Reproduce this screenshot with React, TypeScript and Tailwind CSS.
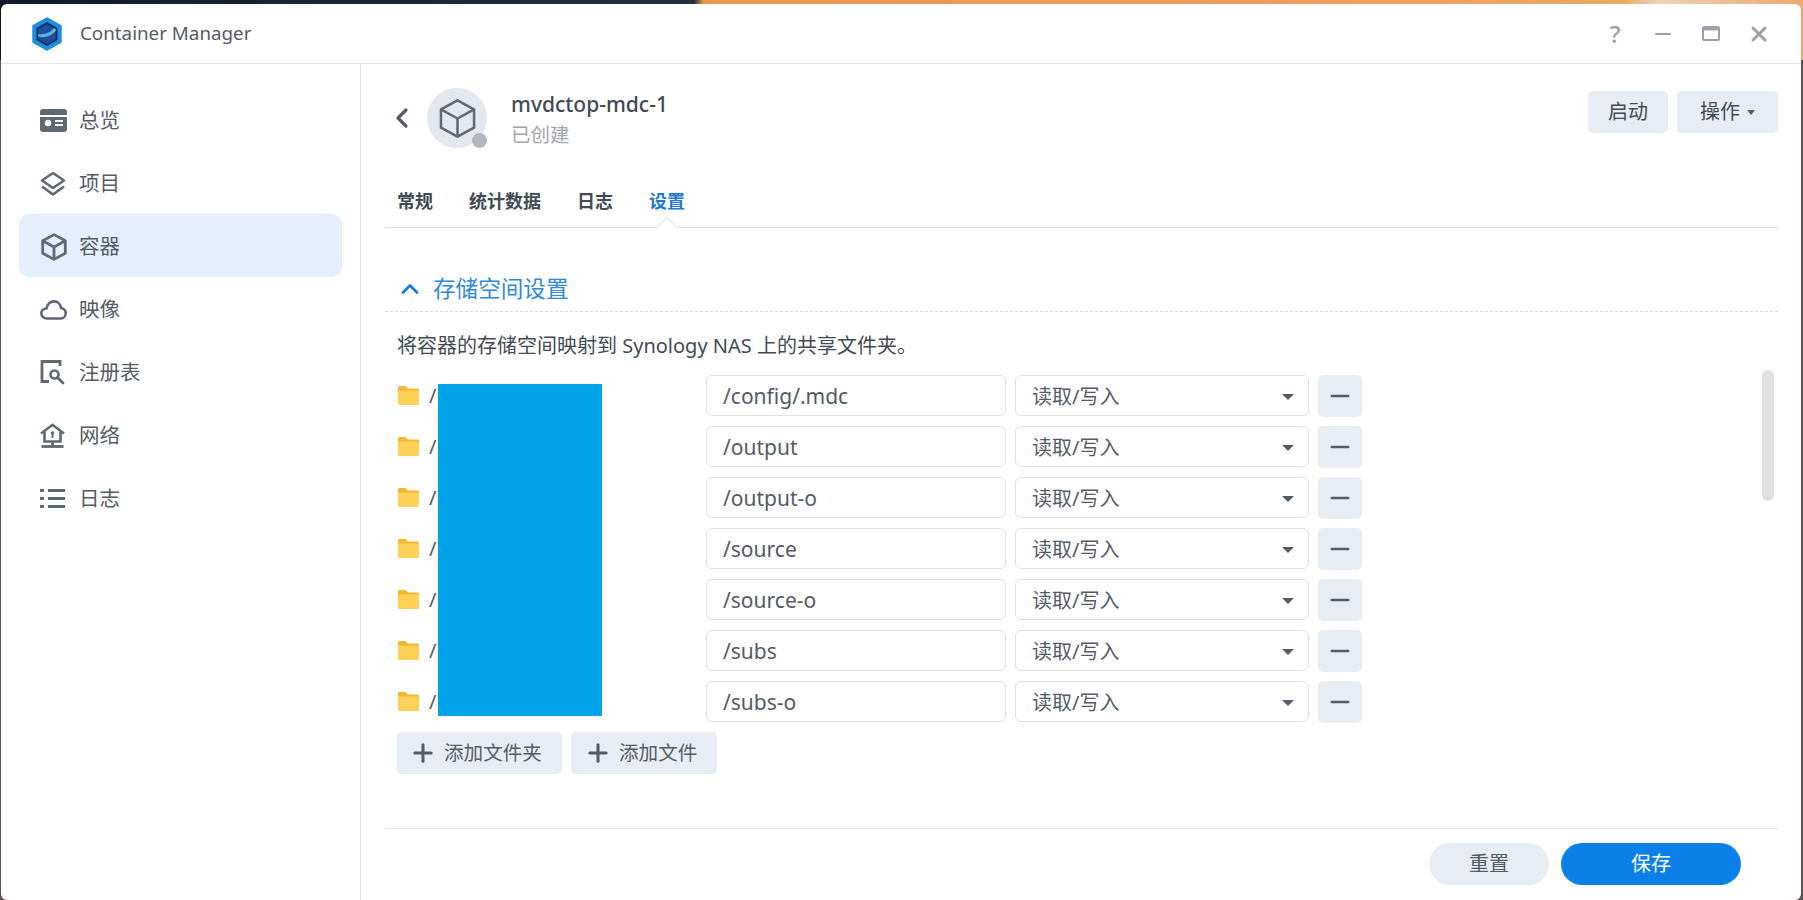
import { ChevronLeft, ChevronUp, Plus, Minus, X } from "lucide-react"

const mountRows = ["/config/.mdc", "/output", "/output-o", "/source", "/source-o", "/subs", "/subs-o"]

const tabs = ["常规", "统计数据", "日志", "设置"]

function Logo() {
  return (
    <svg width="32" height="34" viewBox="0 0 32 34">
      <path d="M16 1.5 L29.5 9.2 V24.8 L16 32.5 L2.5 24.8 V9.2 Z" fill="#1a8fe0" stroke="#1a8fe0" strokeWidth="2.5" strokeLinejoin="round" />
      <path d="M16 5 L26.5 11 V23 L16 29 L5.5 23 V11 Z" fill="#12295a" />
      <path d="M16 7 L24.8 12 V22 L16 27 L7.2 22 V12 Z" fill="#1c4f9f" />
      <path d="M7.2 17 C13 18 20 15.5 23 11 L24.8 12 V13.5 C21 19 13 21.5 7.2 19.5 Z" fill="#58b4d8" />
    </svg>
  )
}

function OverviewIcon() {
  return (
    <svg width="27" height="23" viewBox="0 0 27 23" fill="none">
      <rect width="27" height="23" rx="3" fill="#5f6873" />
      <rect x="0" y="6" width="27" height="2" fill="#fff" />
      <circle cx="8" cy="14" r="3.2" fill="#fff" />
      <rect x="15" y="11" width="8" height="2" fill="#fff" />
      <rect x="15" y="15" width="8" height="2" fill="#fff" />
    </svg>
  )
}

function LayersIcon() {
  return (
    <svg width="26" height="26" viewBox="0 0 26 26" fill="none" stroke="#5f6873" strokeWidth="2.6" strokeLinejoin="round">
      <path d="M13 2 L24 9.5 L13 17 L2 9.5 Z" />
      <path d="M2 15.5 L13 23.5 L24 15.5" />
    </svg>
  )
}

function CubeIcon({ size, stroke, width }: { size: number; stroke: string; width: number }) {
  return (
    <svg width={size} height={size} viewBox="0 0 26 26" fill="none" stroke={stroke} strokeWidth={width} strokeLinejoin="round">
      <path d="M13 1.5 L23.5 7.2 V18.8 L13 24.5 L2.5 18.8 V7.2 Z" />
      <path d="M2.5 7.2 L13 13 L23.5 7.2 M13 13 V24.5" />
    </svg>
  )
}

function CloudIcon() {
  return (
    <svg width="27" height="20" viewBox="0 0 27 20" fill="none" stroke="#5f6873" strokeWidth="2.6" strokeLinejoin="round">
      <path d="M7 18.5 C3.5 18.5 1.3 16 1.3 13.3 C1.3 10.5 3.5 8.5 6.5 8.5 C7.3 4 10.5 1.4 14 1.4 C18 1.4 20.5 4.5 21 8 C23.7 8.5 25.7 10.5 25.7 13.3 C25.7 16.3 23.3 18.5 20.5 18.5 Z" />
    </svg>
  )
}

function RegistryIcon() {
  return (
    <svg width="25" height="25" viewBox="0 0 25 25" fill="none" stroke="#5f6873">
      <path d="M20 6 V1.5 H2 V21.5 H9" strokeWidth="2.8" />
      <circle cx="14.5" cy="14.5" r="4" strokeWidth="2.6" />
      <path d="M17.5 17.5 L23 23" strokeWidth="2.8" strokeLinecap="round" />
    </svg>
  )
}

function NetworkIcon() {
  return (
    <svg width="25" height="25" viewBox="0 0 25 25" fill="none" stroke="#5f6873">
      <path d="M1 10.5 L12.5 1.8 L24 10.5" strokeWidth="2.6" />
      <path d="M4.5 8.5 V18.5 H20.5 V8.5" strokeWidth="2.6" />
      <circle cx="12.5" cy="10" r="1.8" fill="#5f6873" stroke="none" />
      <rect x="11.5" y="10" width="2" height="5" fill="#5f6873" stroke="none" />
      <path d="M1.5 23.5 H23.5" strokeWidth="2.8" />
      <path d="M12.5 18.5 V23" strokeWidth="2.6" />
    </svg>
  )
}

function ListIcon() {
  return (
    <svg width="25" height="19" viewBox="0 0 25 19" fill="#5f6873">
      <rect x="0" y="0" width="4" height="3" />
      <rect x="8" y="0" width="17" height="3" />
      <rect x="0" y="8" width="4" height="3" />
      <rect x="8" y="8" width="17" height="3" />
      <rect x="0" y="16" width="4" height="3" />
      <rect x="8" y="16" width="17" height="3" />
    </svg>
  )
}

function FolderIcon() {
  return (
    <svg width="21" height="19" viewBox="0 0 21 19">
      <path d="M1.5 0 H7.5 L10 2.5 H19.5 A1.5 1.5 0 0 1 21 4 V8 H0 V1.5 A1.5 1.5 0 0 1 1.5 0 Z" fill="#f5b731" />
      <path d="M0 4.5 H21 V17.5 A1.5 1.5 0 0 1 19.5 19 H1.5 A1.5 1.5 0 0 1 0 17.5 Z" fill="#ffd257" />
    </svg>
  )
}

const navItems = [
  { label: "总览", icon: <OverviewIcon /> },
  { label: "项目", icon: <LayersIcon /> },
  { label: "容器", icon: <CubeIcon size={28} stroke="#5f6873" width={2.6} />, active: true },
  { label: "映像", icon: <CloudIcon /> },
  { label: "注册表", icon: <RegistryIcon /> },
  { label: "网络", icon: <NetworkIcon /> },
  { label: "日志", icon: <ListIcon /> },
]

export default function App() {
  return (
    <div
      className="h-[900px] w-[1803px] overflow-hidden bg-[linear-gradient(90deg,#0e1a28_0%,#22303c_38.5%,#ea9550_39%,#eda766_90%,#ecd3b8_92%,#e9a870_100%)] bg-[length:100%_60px] bg-no-repeat pt-1 pr-0.5 pl-px"
      style={{ fontFamily: '"Noto Sans", "Noto Sans CJK SC", sans-serif', backgroundColor: "#5a5254" }}
    >
      <div className="flex h-full flex-col overflow-hidden rounded-[6px] bg-white text-[#414b55]">
        {/* title bar */}
        <div className="flex h-[60px] flex-none items-center border-b border-[#e3e6ea] pr-[30px] pl-[30px]">
          <Logo />
          <span className="ml-[17px] text-[18.8px] text-[#525c67]">Container Manager</span>
          <div className="ml-auto flex items-center gap-[24px] text-[#9aa1a9]">
            <span className="w-[24px] text-center text-[24px] leading-none font-medium">?</span>
            <span className="flex w-[24px] justify-center">
              <Minus size={28} strokeWidth={2.2} />
            </span>
            <span className="flex w-[24px] justify-center">
              <svg width="18" height="15" viewBox="0 0 18 15">
                <rect width="18" height="15" rx="2" fill="#9aa1a9" />
                <rect x="2" y="4.5" width="14" height="8.5" fill="#fff" />
              </svg>
            </span>
            <span className="flex w-[24px] justify-center">
              <X size={24} strokeWidth={3} />
            </span>
          </div>
        </div>

        <div className="flex min-h-0 flex-1">
          {/* sidebar */}
          <div className="flex w-[360px] flex-none flex-col border-r border-[#e3e6ea] pt-[24px] pr-[18px] pl-[18px]">
            {navItems.map((item) => (
              <div
                key={item.label}
                className={`flex h-[63px] items-center rounded-[10px] pt-[2px] pl-[21px] text-[20.5px] ${
                  item.active ? "bg-[#e3f0fc]" : ""
                } text-[#525c67]`}
              >
                <span className="flex w-[39px] flex-none">{item.icon}</span>
                {item.label}
              </div>
            ))}
          </div>

          {/* main */}
          <div className="relative flex min-w-0 flex-1 flex-col pr-[23px] pl-[24px]">
            <div className="flex h-[100px] flex-none items-start pt-[24px]">
              <ChevronLeft size={32} strokeWidth={2.4} className="mt-[14px] ml-[1px] text-[#525c67]" />
              <div className="relative ml-[9px] flex h-[60px] w-[60px] flex-none items-center justify-center rounded-full bg-[#e3e8ee]">
                <CubeIcon size={41} stroke="#5f6873" width={1.6} />
                <span className="absolute right-0 bottom-0 h-[15px] w-[15px] rounded-full bg-[#b3b6ba]" />
              </div>
              <div className="mt-[2px] ml-[24px]">
                <div className="text-[21px] leading-[28px] font-medium text-[#414b55]">mvdctop-mdc-1</div>
                <div className="mt-[3px] text-[19.5px] leading-[28px] text-[#a2a7ad]">已创建</div>
              </div>
              <div className="mt-[3px] ml-auto flex gap-[9px]">
                <button className="h-[42px] w-[80px] rounded-[5px] bg-[#e8edf3] text-[20px] text-[#414b55]">启动</button>
                <button className="flex h-[42px] w-[101px] items-center justify-center rounded-[5px] bg-[#e8edf3] text-[20px] text-[#414b55]">
                  操作
                  <span className="ml-[7px] h-0 w-0 border-x-[4.5px] border-t-[5px] border-x-transparent border-t-[#525c67]" />
                </button>
              </div>
            </div>

            {/* tabs */}
            <div className="relative flex h-[64px] flex-none items-center gap-[36px] border-b border-[#dfe3e8] pt-[12px] pl-[12px] text-[18px] font-bold text-[#414b55]">
              {tabs.map((t) => (
                <span key={t} className={t === "设置" ? "relative text-[#1f78d1]" : ""}>
                  {t}
                  {t === "设置" && (
                    <span className="absolute top-[32px] left-1/2 h-[15px] w-[15px] -translate-x-1/2 rotate-45 border-t border-l border-[#dfe3e8] bg-white" />
                  )}
                </span>
              ))}
            </div>

            {/* section */}
            <div className="mt-[43px] flex h-[41px] flex-none items-center border-b border-dashed border-[#d8dce1] pb-[4px] pl-[11px] text-[#2f8adb]">
              <ChevronUp size={28} strokeWidth={2.4} className="mr-[9px] text-[#1f78d1]" />
              <span className="text-[22.6px]">存储空间设置</span>
            </div>

            <div className="relative pl-[12px]">
              <div className="mt-[20px] text-[20px] leading-[28px] text-[#414b55]">
                将容器的存储空间映射到 Synology NAS 上的共享文件夹。
              </div>

              <div className="mt-[15px] flex flex-col gap-[9px]">
                {mountRows.map((path) => (
                  <div key={path} className="flex h-[42px] items-start">
                    <div className="flex h-[41px] w-[309px] flex-none items-center">
                      <span className="ml-[1px] flex">
                        <FolderIcon />
                      </span>
                      <span className="ml-[10px] text-[20px] text-[#525c67]">/</span>
                    </div>
                    <div className="flex h-[41px] w-[300px] flex-none items-center rounded-[6px] border border-[#dfe3e8] pt-[2px] pl-[16px] text-[21px] text-[#525c67]">
                      {path}
                    </div>
                    <div className="ml-[9px] flex h-[41px] w-[294px] flex-none items-center justify-between rounded-[6px] border border-[#dfe3e8] pt-[2px] pr-[14px] pl-[16px] text-[20px] text-[#525c67]">
                      读取/写入
                      <span className="h-0 w-0 border-x-[6.5px] border-t-[6px] border-x-transparent border-t-[#525c67]" />
                    </div>
                    <button className="ml-[9px] flex h-[42px] w-[44px] flex-none items-center justify-center rounded-[5px] bg-[#e8edf3] text-[#525c67]">
                      <Minus size={28} strokeWidth={2.2} />
                    </button>
                  </div>
                ))}
              </div>

              {/* redaction */}
              <div className="absolute top-[72px] left-[53px] h-[332px] w-[164px] bg-[#00a2e8]" />

              <div className="mt-[9px] flex gap-[9px]">
                <button className="flex h-[42px] w-[165px] items-center rounded-[5px] bg-[#e8edf3] pl-[12px] text-[19.6px] text-[#525c67]">
                  <Plus size={28} strokeWidth={2.6} className="mr-[7px]" />
                  添加文件夹
                </button>
                <button className="flex h-[42px] w-[146px] items-center rounded-[5px] bg-[#e8edf3] pl-[13px] text-[19.6px] text-[#525c67]">
                  <Plus size={28} strokeWidth={2.6} className="mr-[7px]" />
                  添加文件
                </button>
              </div>
            </div>

            {/* scrollbar */}
            <div className="absolute top-[306px] right-[27px] h-[131px] w-[12px] rounded-full bg-[#e0e0e0]" />

            {/* footer */}
            <div className="mt-auto flex h-[72px] flex-none items-start justify-end gap-[12px] border-t border-[#e3e6ea] pt-[14px] pr-[37px]">
              <button className="h-[42px] w-[120px] rounded-full bg-[#e8edf3] text-[20px] text-[#525c67]">重置</button>
              <button className="h-[42px] w-[180px] rounded-full bg-[#0a80e8] text-[20px] text-white">保存</button>
            </div>
          </div>
        </div>
      </div>
    </div>
  )
}
